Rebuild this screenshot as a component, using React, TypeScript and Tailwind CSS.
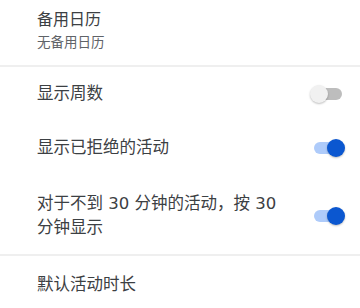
import React from "react";

function Toggle({ on }: { on: boolean }) {
  return (
    <div className="relative w-[34px] h-[18px] shrink-0">
      <div
        className={
          "absolute left-[3px] right-[3px] top-[3px] h-[12px] rounded-full " +
          (on ? "bg-[#aecbfa]" : "bg-[#bdbdbd]")
        }
      />
      <div
        className={
          "absolute top-0 w-[18px] h-[18px] rounded-full shadow-[0_1px_2px_rgba(0,0,0,0.25)] " +
          (on ? "left-[16px] bg-[#0b57d0]" : "left-[-1px] bg-[#f1f1f1]")
        }
      />
    </div>
  );
}

export default function App() {
  const font = { fontFamily: '"DejaVu Sans", "Noto Sans CJK SC", sans-serif' };
  return (
    <div className="w-[360px] h-[308px] bg-white overflow-hidden" style={font}>
      <div className="pl-[37px] pt-[8px] pb-[13px]">
        <div className="text-[16px] leading-[24px] text-[#3c4043]">备用日历</div>
        <div className="text-[13.5px] leading-[20px] text-[#5f6368]">无备用日历</div>
      </div>
      <div className="h-[2px] bg-[#efefef]" />
      <div className="flex flex-col pl-[37px] pr-[15px] pt-[15px] pb-[14px]">
        <div className="flex items-center justify-between">
          <div className="text-[16.5px] leading-[24px] text-[#3c4043]">显示周数</div>
          <Toggle on={false} />
        </div>
        <div className="flex items-center justify-between mt-[30px]">
          <div className="text-[16.5px] leading-[24px] text-[#3c4043]">显示已拒绝的活动</div>
          <Toggle on={true} />
        </div>
        <div className="flex items-center justify-between mt-[32px]">
          <div className="text-[16.5px] leading-[24px] text-[#3c4043]">
            对于不到 30 分钟的活动，按 30
            <br />
            分钟显示
          </div>
          <Toggle on={true} />
        </div>
      </div>
      <div className="h-[2px] bg-[#efefef]" />
      <div className="pl-[37px] pt-[17px]">
        <div className="text-[16.5px] leading-[24px] text-[#3c4043]">默认活动时长</div>
      </div>
    </div>
  );
}
